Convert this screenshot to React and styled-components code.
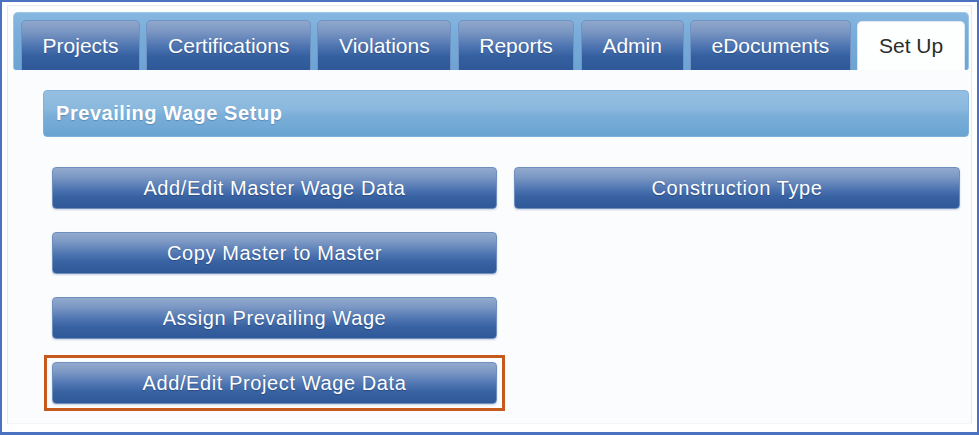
import React from "react";
import styled, { createGlobalStyle } from "styled-components";

const Global = createGlobalStyle`
  html, body { margin: 0; padding: 0; background: #ffffff; }
  body { font-family: "Liberation Sans", Arial, sans-serif; }
  * { box-sizing: border-box; }
`;

const Frame = styled.div`
  width: 979px;
  height: 435px;
  border: 2px solid #4a72c1;
  border-bottom-width: 3px;
  padding: 3px 5px 8px 5px;
  display: flex;
  flex-direction: column;
  background: #ffffff;
`;

const Panel = styled.div`
  flex: 1;
  border: 1px solid #e1e9f1;
  border-bottom-color: #f3f6f9;
  background: #fbfcfd;
  padding: 6px 2px 0 5px;
`;

const TabBar = styled.nav`
  height: 58px;
  display: flex;
  align-items: flex-end;
  gap: 6.4px;
  padding: 0 0 0 7px;
  border-radius: 5px 5px 3px 3px;
  border: 1px solid #9cc6e7;
  border-bottom: none;
  background: linear-gradient(to bottom, #86b7e0 0%, #78acd9 40%, #6da4d4 100%);
`;

const Tab = styled.div`
  flex-shrink: 0;
  white-space: nowrap;
  height: ${(p) => (p.$active ? "49px" : "50px")};
  padding: 0 20.6px;
  display: flex;
  align-items: center;
  justify-content: center;
  font-size: 21px;
  border-radius: 5px 5px 0 0;
  color: ${(p) => (p.$active ? "#2c2c2c" : "#ffffff")};
  text-shadow: ${(p) => (p.$active ? "none" : "0 1px 1px rgba(20, 40, 80, 0.35)")};
  border: 1px solid ${(p) => (p.$active ? "#dce7f1" : "#6e93c4")};
  border-bottom: none;
  background: ${(p) =>
    p.$active
      ? "#fdfefe"
      : "linear-gradient(to bottom, #91a8cc 0%, #7a96c2 22%, #4d74b1 52%, #3560a0 72%, #2e5897 100%)"};
`;

const Content = styled.div`
  padding: 20px 0 0 30px;
`;

const Header = styled.h2`
  margin: 0;
  height: 47px;
  display: flex;
  align-items: center;
  padding-left: 12px;
  font-size: 20px;
  font-weight: bold;
  letter-spacing: 0.55px;
  color: #ffffff;
  text-shadow: 0 1px 1px rgba(40, 80, 130, 0.35);
  border-radius: 4px;
  border: 1px solid #7fb1da;
  background: linear-gradient(
    to bottom,
    #94bfe1 0%,
    #8ab8de 40%,
    #7aaed8 55%,
    #6aa3d2 100%
  );
`;

const ButtonGrid = styled.div`
  margin-top: 30px;
  padding: 0 8px 0 9px;
  display: grid;
  grid-template-columns: 445px 446px;
  column-gap: 17px;
  row-gap: 23px;
`;

const ActionButton = styled.button`
  position: relative;
  height: 42px;
  width: 100%;
  padding: 0;
  font-family: "Liberation Sans", Arial, sans-serif;
  font-size: 20px;
  letter-spacing: 0.6px;
  color: #ffffff;
  text-shadow: 0 1px 1px rgba(15, 35, 75, 0.4);
  border: 1px solid #6f8fbf;
  border-radius: 4px;
  cursor: pointer;
  box-shadow: 0 1px 2px rgba(60, 90, 140, 0.25);
  background: linear-gradient(
    to bottom,
    #92aacd 0%,
    #7c98c4 22%,
    #4f76b2 52%,
    #3862a2 72%,
    #2e5897 100%
  );

  ${(p) =>
    p.$highlighted &&
    `
    &::after {
      content: "";
      position: absolute;
      top: -8px;
      bottom: -8px;
      left: -9px;
      right: -9px;
      border: 3px solid #c55a1c;
      pointer-events: none;
    }
  `}
`;

const tabs = [
  "Projects",
  "Certifications",
  "Violations",
  "Reports",
  "Admin",
  "eDocuments",
  "Set Up",
];

export default function App() {
  return (
    <>
      <Global />
      <Frame>
        <Panel>
          <TabBar>
            {tabs.map((t) => (
              <Tab key={t} $active={t === "Set Up"}>
                {t}
              </Tab>
            ))}
          </TabBar>
          <Content>
            <Header>Prevailing Wage Setup</Header>
            <ButtonGrid>
              <ActionButton>Add/Edit Master Wage Data</ActionButton>
              <ActionButton>Construction Type</ActionButton>
              <ActionButton>Copy Master to Master</ActionButton>
              <span />
              <ActionButton>Assign Prevailing Wage</ActionButton>
              <span />
              <ActionButton $highlighted>Add/Edit Project Wage Data</ActionButton>
            </ButtonGrid>
          </Content>
        </Panel>
      </Frame>
    </>
  );
}
